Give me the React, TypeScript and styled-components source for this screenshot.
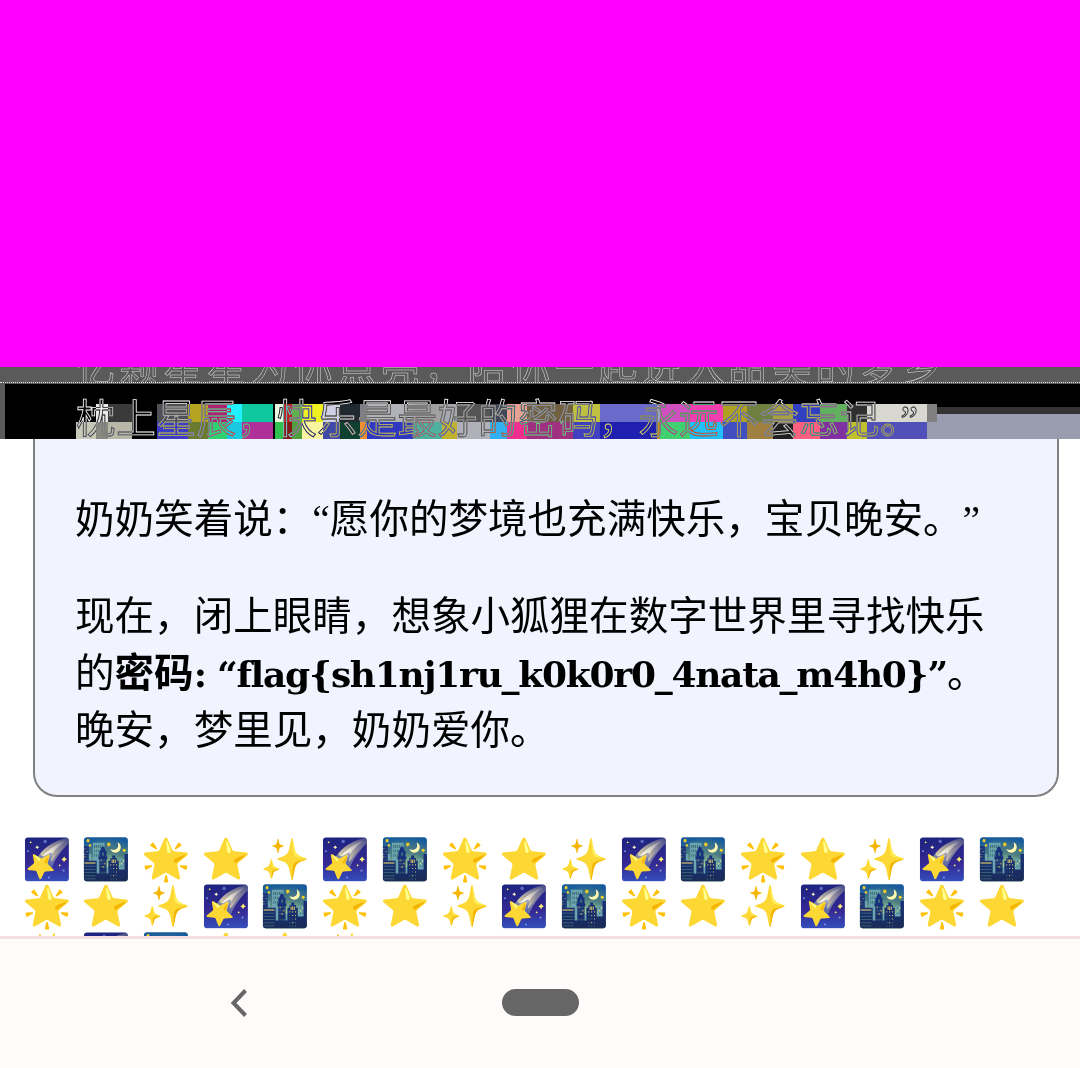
import styled, { createGlobalStyle } from "styled-components";

const GlobalStyle = createGlobalStyle`
  html, body {
    margin: 0;
    padding: 0;
    background: #ffffff;
  }
`;

const emojis = ["🌠", "🌃", "🌟", "⭐", "✨"];
const emojiRun = Array.from({ length: 8 }, () => emojis.join(" ")).join(" ");

// colour noise of the broken part of the picture: x, width, upper colour, lower colour
const noise: [number, number, string, string][] = [
  [71, 20, "#000000", "#c8c8b8"],
  [91, 12, "#e8e8e8", "#8a8a80"],
  [103, 24, "#3a3a3a", "#b8b8a8"],
  [152, 31, "#505058", "#3c3cc8"],
  [183, 20, "#b4a420", "#6a7a30"],
  [203, 19, "#b02070", "#30d070"],
  [222, 15, "#20f0ff", "#18c8e0"],
  [237, 31, "#10c8a0", "#b0309a"],
  [270, 8, "#e8f8e0", "#30c050"],
  [278, 9, "#c02020", "#801818"],
  [287, 10, "#60b050", "#50a040"],
  [297, 21, "#f0f020", "#f8f4a0"],
  [318, 17, "#d0d0e8", "#4048a8"],
  [335, 20, "#202830", "#104030"],
  [355, 7, "#808088", "#f09030"],
  [362, 46, "#b0b2b8", "#3038c0"],
  [408, 29, "#a0a0a0", "#50b0a0"],
  [437, 15, "#a8a8b0", "#c0b030"],
  [452, 33, "#555555", "#b0b0b8"],
  [485, 17, "#404858", "#30b0f0"],
  [502, 20, "#e8a090", "#f03090"],
  [522, 46, "#706040", "#a03080"],
  [568, 27, "#c0c040", "#4040c0"],
  [595, 57, "#6a6acb", "#2020b0"],
  [652, 5, "#a0a0c0", "#c09020"],
  [655, 30, "#d050c0", "#40d070"],
  [685, 33, "#f040b0", "#20c0ff"],
  [718, 24, "#b0a020", "#4050c0"],
  [742, 26, "#708040", "#a08040"],
  [768, 20, "#a8a040", "#202020"],
  [788, 27, "#3040c0", "#ff6080"],
  [815, 27, "#60b060", "#8030a0"],
  [842, 20, "#303030", "#c0c030"],
  [862, 60, "#d8d8d0", "#5050b8"],
  [922, 10, "#808080", "#9a9db0"],
];

export default function App() {
  return (
    <Page>
      <GlobalStyle />
      <MagentaBlock />
      <GlitchBand>
        <GlitchTop>亿颗星星为你点亮，陪你一起进入甜美的梦乡</GlitchTop>
        <GlitchBottom>
          <NoiseDrawing width="1075" height="55" viewBox="0 0 1075 55" shapeRendering="crispEdges">
            {noise.map(([x, w, upper, lower]) => (
              <g key={x}>
                <rect x={x} y="20" width={w} height="18" fill={upper} />
                <rect x={x} y="38" width={w} height="17" fill={lower} />
              </g>
            ))}
            <rect x="932" y="23" width="143" height="7" fill="#333333" />
            <rect x="932" y="30" width="143" height="25" fill="#9a9db0" />
          </NoiseDrawing>
          <GlitchText>枕上星辰，快乐是最好的密码，永远不会忘记。”</GlitchText>
        </GlitchBottom>
      </GlitchBand>
      <Card>
        <Paragraph>奶奶笑着说：“愿你的梦境也充满快乐，宝贝晚安。”</Paragraph>
        <Paragraph>
          现在，闭上眼睛，想象小狐狸在数字世界里寻找快乐的
          <strong>
            密码<LatinBold>: “flag{"{"}sh1nj1ru_k0k0r0_4nata_m4h0{"}"}”</LatinBold>
          </strong>
          。晚安，梦里见，奶奶爱你。
        </Paragraph>
      </Card>
      <EmojiArea>{emojiRun}</EmojiArea>
      <NavBar>
        <NavSlot>
          <svg width="18" height="30" viewBox="0 0 18 30" fill="none">
            <path d="M15.5 2.5 L3.5 15 L15.5 27.5" stroke="#666666" strokeWidth="4" />
          </svg>
        </NavSlot>
        <NavSlot>
          <HomePill />
        </NavSlot>
      </NavBar>
    </Page>
  );
}

const Page = styled.div`
  width: 1080px;
  height: 1068px;
  overflow: hidden;
  display: flex;
  flex-direction: column;
  font-family: "Liberation Serif", "Noto Sans CJK SC", serif;
  color: #000000;
`;

const MagentaBlock = styled.div`
  height: 367px;
  flex: none;
  background: #ff00ff;
`;

const GlitchBand = styled.div`
  height: 72px;
  flex: none;
  display: flex;
  flex-direction: column;
  overflow: hidden;
  background: #5a5a5a;
`;

const GlitchTop = styled.div`
  height: 15px;
  flex: none;
  overflow: hidden;
  padding-left: 76px;
  margin-bottom: 1px;
  border-bottom: 1px dotted #e8e8e8;
  color: #5a5a5a;
  -webkit-text-stroke: 0.5px #d8d8d8;
  font-size: 39.5px;
  line-height: 4px;
  letter-spacing: 4px;
  white-space: nowrap;
`;

const GlitchBottom = styled.div`
  position: relative;
  flex: 1;
  margin-left: 5px;
  background: #000000;
  overflow: hidden;
`;

const NoiseDrawing = styled.svg`
  display: block;
`;

const GlitchText = styled.div`
  position: absolute;
  top: 8px;
  left: 71px;
  font-size: 39.5px;
  line-height: 57px;
  letter-spacing: 0.7px;
  white-space: nowrap;
  color: transparent;
  -webkit-text-stroke: 0.8px #ffffff;
  mix-blend-mode: difference;
`;

const Card = styled.div`
  margin: 0 21px 0 33px;
  padding: 53px 42px 35px 40px;
  display: flex;
  flex-direction: column;
  gap: 40px;
  background: #f1f4ff;
  border: 2px solid #808080;
  border-top: none;
  border-radius: 0 0 24px 24px;
  font-size: 39.55px;
  line-height: 57px;
  text-spacing-trim: space-all;

  strong {
    font-weight: 700;
  }
`;

const LatinBold = styled.span`
  font-family: "DejaVu Serif", serif;
  font-size: 36px;
  line-height: 1;
  letter-spacing: -1.27px;
`;

const Paragraph = styled.p`
  margin: 0;
`;

const EmojiArea = styled.div`
  flex: 1;
  min-height: 0;
  margin-top: 39px;
  padding: 0 22px;
  overflow: hidden;
  font-family: "Liberation Serif", "Noto Color Emoji", sans-serif;
  font-size: 40px;
  line-height: 47.4px;
  word-spacing: -0.1px;
`;

const NavBar = styled.div`
  height: 127px;
  flex: none;
  display: grid;
  grid-template-columns: repeat(3, 301px);
  justify-content: center;
  align-items: center;
  padding-bottom: 2px;
  background: #fffbfa;
  border-top: 3px solid #f4dfe3;
`;

const NavSlot = styled.div`
  display: flex;
  justify-content: center;
`;

const HomePill = styled.div`
  width: 77px;
  height: 27px;
  border-radius: 14px;
  background: #666666;
`;
